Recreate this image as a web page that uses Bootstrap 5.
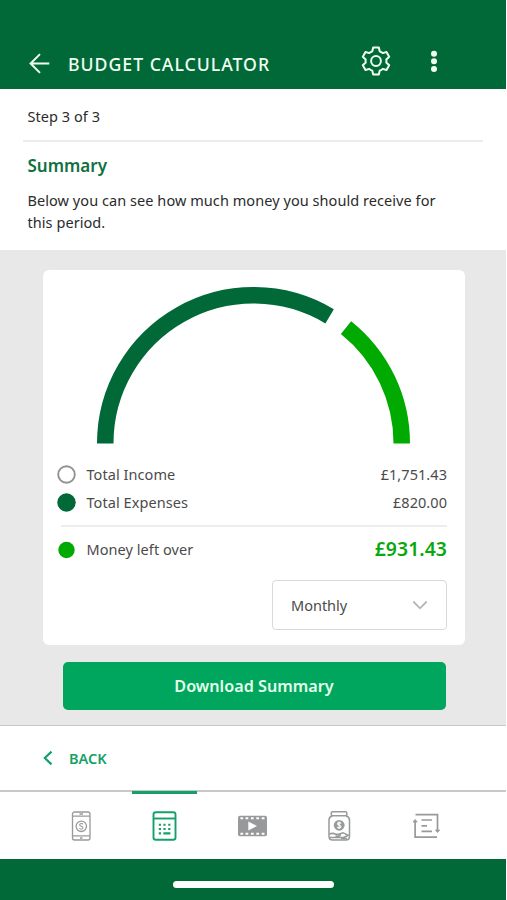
<!DOCTYPE html>
<html lang="en">
<head>
<meta charset="utf-8">
<meta name="viewport" content="width=device-width, initial-scale=1">
<title>Budget Calculator</title>
<link href="https://cdn.jsdelivr.net/npm/bootstrap@5.3.0/dist/css/bootstrap.min.css" rel="stylesheet">
<style>
  body { font-family: "Noto Sans", "Open Sans", sans-serif; background: #fff; color: #333; overflow: hidden; }
  svg { display: block; flex: none; }
  .app { width: 506px; height: 900px; font-size: 14.5px; line-height: 22px; }
  .app-header { height: 89px; background: #006937; padding: 36px 62px 0 28px; color: #f1fff2; }
  .app-title { font-size: 17.7px; font-weight: 500; letter-spacing: .98px; margin-left: 17px; line-height: 24px; }
  .header-actions { gap: 32px; }
  .intro { height: 161px; padding: 0 23px; color: #2b2b2b; }
  .step { height: 53px; padding: 16px 5px 0 4.5px; border-bottom: 2px solid #ededed; letter-spacing: .05px; }
  .summary-title { font-size: 17px; font-weight: 600; letter-spacing: 0; color: #10703f; line-height: 24px; margin: 12px 0 11px 4.5px; }
  .intro-text { width: 425px; margin: 0 0 0 4.5px; letter-spacing: .06px; }
  .results { height: 475px; background: #e8e8e8; padding: 20px 41px 0 43px; }
  .result-card { height: 375px; border: 0; border-radius: 6px; padding: 17px 18px 0 14px; color: #4b4b4b; }
  .gauge { margin-left: 40px; }
  .legend-row { height: 28px; letter-spacing: .06px; }
  .legend-row svg { margin-right: 9.5px; }
  .rule { height: 2px; background: #ededed; margin: 9px 0 0 4px; }
  .left-over { font-size: 19.4px; font-weight: 600; color: #0aa80d; }
  .period { width: 175px; height: 50px; border: 1.5px solid #d9d9d9; border-radius: 4px; padding: 0 18px; margin-top: 17px; background: #fff; color: #4b4b4b; font-size: 14.5px; }
  .btn-download, .btn-download:hover { width: 383px; height: 48px; margin: 17px 0 0 19.5px; background: #00a65d; color: #e4ffec; border: 0; border-radius: 5px; font-size: 16.2px; font-weight: 600; padding: 0; }
  .back-bar { height: 65px; border-top: 1.5px solid #c8c8c8; padding-left: 42px; color: #14a068; font-weight: 600; font-size: 14.5px; }
  .back-label { margin-left: 15px; }
  .tabs { height: 69px; border-top: 2px solid #c9c9c9; color: #98999b; padding-left: 65px; gap: 55.5px; }
  .tab-icon { position: relative; height: 67px; }
  .tab-icon.active { color: #14a068; margin-left: -4.5px; }
  .tab-icon.active::before { content: ""; position: absolute; top: -1px; left: -16px; width: 65px; height: 3px; background: #14a068; }
  .home-area { height: 41px; background: #006937; padding-top: 10px; }
  .home-pill { width: 161px; height: 7px; border-radius: 4px; background: #fff; }
</style>
<script src="https://cdn.jsdelivr.net/npm/bootstrap@5.3.0/dist/js/bootstrap.bundle.min.js"></script>
</head>
<body>
<div class="app d-flex flex-column">
  <header class="app-header d-flex align-items-start">
    <svg class="mt-3" width="23" height="23" viewBox="0 0 23 23" fill="none" stroke="currentColor" stroke-width="2"><path d="M21.3 11.5H2.5M12 2.1 2.6 11.5 12 20.9"/></svg>
    <h1 class="app-title mb-0 mt-3">BUDGET CALCULATOR</h1>
    <div class="header-actions d-flex ms-auto pt-2">
      <svg width="32" height="34" viewBox="-16 -17 32 34" fill="none" stroke="currentColor" stroke-width="2" stroke-linejoin="round"><path d="M-2.8-13.6H2.8L3.7-9.7Q5.4-9 6.7-7.9L10.5-9 13.2-4.3 10.3-1.6Q10.6 0 10.3 1.6L13.2 4.3 10.5 9 6.7 7.9Q5.4 9 3.7 9.7L2.8 13.6H-2.8L-3.7 9.7Q-5.4 9-6.7 7.9L-10.5 9-13.2 4.3-10.3 1.6Q-10.6 0-10.3-1.6L-13.2-4.3-10.5-9-6.7-7.9Q-5.4-9-3.7-9.7Z"/><circle r="4.9"/></svg>
      <svg width="20" height="34" viewBox="-10 -17 20 34" fill="currentColor"><circle cy="-7.3" r="3"/><circle cy=".3" r="3"/><circle cy="7.9" r="3"/></svg>
    </div>
  </header>

  <section class="intro">
    <div class="step">Step 3 of 3</div>
    <h2 class="summary-title">Summary</h2>
    <p class="intro-text">Below you can see how much money you should receive for this period.</p>
  </section>

  <main class="results">
    <div class="card result-card">
      <svg class="gauge" width="313" height="157" viewBox="97 287 313 157" fill="none" stroke-width="16.5">
        <path stroke="#006937" d="M105.25 443.5A148.25 148.25 0 0 1 329.6 316.3"/>
        <path stroke="#00aa00" d="M346 327.6A148.25 148.25 0 0 1 401.75 443.5"/>
      </svg>
      <div class="legend-row d-flex align-items-center mt-3">
        <svg width="20" height="20"><circle cx="9.5" cy="10.5" r="8.3" fill="none" stroke="#929292" stroke-width="1.9"/></svg>
        <span>Total Income</span><span class="ms-auto">£1,751.43</span>
      </div>
      <div class="legend-row d-flex align-items-center">
        <svg width="20" height="20"><circle cx="9.5" cy="10.5" r="9.2" fill="#006937"/></svg>
        <span>Total Expenses</span><span class="ms-auto">£820.00</span>
      </div>
      <div class="rule"></div>
      <div class="legend-row d-flex align-items-center mt-2">
        <svg width="20" height="20"><circle cx="9.5" cy="11" r="8.2" fill="#00aa00"/></svg>
        <span>Money left over</span><span class="left-over ms-auto">£931.43</span>
      </div>
      <button class="period d-flex align-items-center justify-content-between ms-auto" type="button">
        <span>Monthly</span>
        <svg width="16" height="10" viewBox="0 0 16 10" fill="none" stroke="#b5b5b5" stroke-width="1.8"><path d="M1.3 1.5 8 8.3 14.7 1.5"/></svg>
      </button>
    </div>
    <button class="btn btn-download" type="button">Download Summary</button>
  </main>

  <div class="back-bar d-flex align-items-center">
    <svg width="12" height="16" viewBox="0 0 12 16" fill="none" stroke="currentColor" stroke-width="2.2"><path d="M9.5 1.6 2.8 8 9.5 14.4"/></svg>
    <span class="back-label">BACK</span>
  </div>

  <nav class="tabs d-flex align-items-start">
    <div class="tab-icon d-flex align-items-center">
      <svg width="32" height="32" viewBox="0 0 32 32" fill="none" stroke="currentColor" stroke-width="1.3"><rect x="7.5" y="2" width="17.5" height="28" rx="2"/><path d="M7.5 6.2H25M7.5 25.8H25M14.5 4h3.5M15 28h2.5"/><circle cx="16.3" cy="16.3" r="5.2"/><path stroke-width="1.1" d="M18 14.4Q17.4 13.4 16.2 13.5 14.6 13.6 14.7 14.9 14.8 16 16.4 16.3 18 16.7 18 17.8 17.9 19.1 16.3 19.2 14.9 19.2 14.5 18.1"/></svg>
    </div>
    <div class="tab-icon active d-flex align-items-center">
      <svg width="32" height="32" viewBox="0 0 32 32" fill="none" stroke="currentColor" stroke-width="1.9"><rect x="5.5" y="2.2" width="22" height="27.6" rx="2.3"/><path d="M5.5 8.5h22"/><path stroke-width="2.1" d="M10.8 14.8h2.2M15.4 14.8h2.2M20.2 14.8h2.2M10.8 19h2.2M15.4 19h2.2M20.2 19h2.2M10.8 23.4h2.2M15.4 23.4h7"/></svg>
    </div>
    <div class="tab-icon d-flex align-items-center">
      <svg width="32" height="32" viewBox="0 0 32 32"><rect x="2" y="5.7" width="29" height="20.6" rx="1.8" fill="currentColor"/><path stroke="#fff" stroke-width="2" d="M4.4 8.3h2.7M9.5 8.3h2.8M14.9 8.3h2.8M20.3 8.3h2.8M25.7 8.3h2.8M4.4 23.8h2.7M9.5 23.8h2.8M14.9 23.8h2.8M20.3 23.8h2.8M25.7 23.8h2.8"/><path fill="#fff" d="M12.3 11.6 21 16l-8.7 4.4z"/></svg>
    </div>
    <div class="tab-icon d-flex align-items-center">
      <svg width="32" height="32" viewBox="0 0 32 32" fill="none" stroke="currentColor" stroke-width="1.5"><rect x="8.3" y="1.7" width="15.5" height="4" rx="1.3"/><path d="M9.3 5.7Q6 7 6 10V26.5Q6 30 9.5 30H23Q26.5 30 26.5 26.5V10Q26.5 7 23 5.7"/><circle cx="16.2" cy="15.3" r="5.4" fill="currentColor" stroke="none"/><path stroke="#fff" stroke-width="1.1" d="M18.1 13.6Q17.5 12.5 16.2 12.6 14.5 12.7 14.6 13.9 14.7 15 16.3 15.2 18 15.5 18 16.7 17.9 18 16.2 18 14.8 18 14.3 16.9M16.2 11.6V19"/><path d="M6.5 24.2Q9.5 22.5 13 24.3H17Q18 25.5 16 26H12.5M6.5 27.5H20.5L25.5 25.2M16.5 24l3.5-1.3 5.7 2.8M18 28.5h6"/></svg>
    </div>
    <div class="tab-icon d-flex align-items-center">
      <svg width="32" height="32" viewBox="0 0 32 32" fill="none" stroke="currentColor" stroke-width="1.7"><path d="M4.5 4.6H26.5V20.5M26 27.2H4.1V11.5M10.5 10H21M10.5 15.8H16M10.5 21.3H21"/><path fill="currentColor" stroke-width=".8" d="M24.4 20h4.2L26.5 22.6zM2 12h4.2L4.1 9.4z"/></svg>
    </div>
  </nav>

  <footer class="home-area d-flex justify-content-center align-items-center">
    <div class="home-pill"></div>
  </footer>
</div>
</body>
</html>
